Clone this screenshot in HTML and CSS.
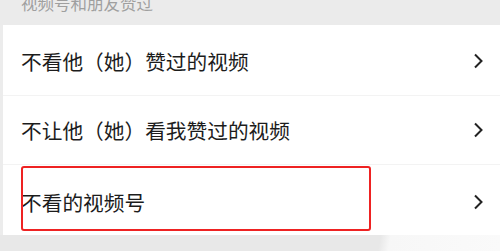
FILE: index.html
```html
<!DOCTYPE html>
<html lang="zh">
<head>
<meta charset="utf-8">
<link rel="stylesheet" href="styles.css">
</head>
<body>
<div class="page">
  <div class="section-head"><span class="section-title">视频号和朋友赞过</span></div>
  <div class="list">
    <div class="row row-1">
      <span class="label">不看他（她）赞过的视频</span>
      <svg class="chev" viewBox="0 0 10 16" width="10" height="16"><path d="M2 1.5 L8.5 8 L2 14.5" fill="none" stroke="#222" stroke-width="2"/></svg>
    </div>
    <div class="row row-2">
      <span class="label">不让他（她）看我赞过的视频</span>
      <svg class="chev" viewBox="0 0 10 16" width="10" height="16"><path d="M2 1.5 L8.5 8 L2 14.5" fill="none" stroke="#222" stroke-width="2"/></svg>
    </div>
    <div class="row row-3">
      <span class="label">不看的视频号</span>
      <svg class="chev" viewBox="0 0 10 16" width="10" height="16"><path d="M2 1.5 L8.5 8 L2 14.5" fill="none" stroke="#222" stroke-width="2"/></svg>
      <div class="highlight"></div>
    </div>
  </div>
  <div class="foot"></div>
</div>
</body>
</html>
```
FILE: styles.css
```css
* { box-sizing: border-box; }
html, body {
  margin: 0;
  padding: 0;
  background: #ebebeb;
}
.page {
  width: 500px;
  height: 251px;
  overflow: hidden;
  font-family: "Noto Sans CJK SC", "Noto Sans", sans-serif;
  display: flex;
  flex-direction: column;
}
.section-head {
  height: 25px;
  background: #ebebeb;
  padding-left: 21px;
  overflow: hidden;
}
.section-title {
  display: block;
  font-size: 16.5px;
  line-height: 16px;
  margin-top: -5px;
  color: #9f9f9f;
}
.list {
  background: #ffffff;
  border-left: 3px solid #ececec;
}
.row {
  position: relative;
  display: flex;
  align-items: center;
  justify-content: space-between;
  padding-left: 18px;
  padding-right: 17px;
  border-bottom: 1px solid #f3f3f3;
}
.row-1 { height: 71px; padding-top: 2px; }
.row-2 { height: 69px; }
.row-3 { height: 70px; border-bottom: none; padding-top: 4px; }
.label {
  font-size: 20.7px;
  color: #1c1c1c;
  line-height: 1;
}
.chev {
  display: block;
  flex: none;
}
.highlight {
  position: absolute;
  left: 18px;
  top: 1px;
  width: 350px;
  height: 65px;
  border: 2.5px solid #ee2222;
  border-radius: 3px;
}
.foot {
  flex: 1;
  background: linear-gradient(100deg, #e8e8e8 0, #e8e8e8 375px, #f7f7f7 385px, #fafafa 100%);
}
```
